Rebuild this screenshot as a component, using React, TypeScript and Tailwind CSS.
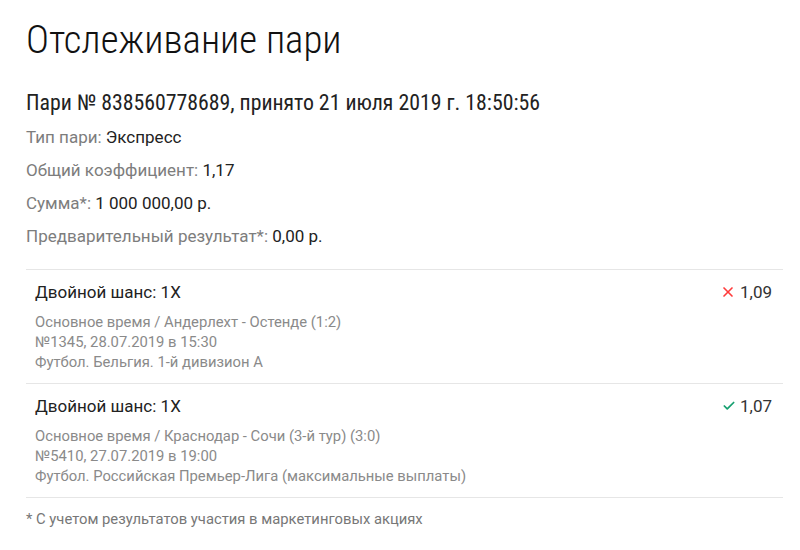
import { X, Check } from 'lucide-react'

interface Leg {
  market: string
  event: string
  number: string
  league: string
  odds: string
  won: boolean
}

const legs: Leg[] = [
  {
    market: 'Двойной шанс: 1X',
    event: 'Основное время / Андерлехт - Остенде (1:2)',
    number: '№1345, 28.07.2019 в 15:30',
    league: 'Футбол. Бельгия. 1-й дивизион А',
    odds: '1,09',
    won: false,
  },
  {
    market: 'Двойной шанс: 1X',
    event: 'Основное время / Краснодар - Сочи (3-й тур) (3:0)',
    number: '№5410, 27.07.2019 в 19:00',
    league: 'Футбол. Российская Премьер-Лига (максимальные выплаты)',
    odds: '1,07',
    won: true,
  },
]

const info = [
  { label: 'Тип пари:', value: 'Экспресс' },
  { label: 'Общий коэффициент:', value: '1,17' },
  { label: 'Сумма*:', value: '1 000 000,00 р.' },
  { label: 'Предварительный результат*:', value: '0,00 р.' },
]

export default function App() {
  return (
    <main className="min-h-screen bg-white pl-[26px] pr-[17px] pt-[20px] font-['Roboto',sans-serif] text-[#222]">
      <h1 className="text-[38.9px] leading-[40px] font-light text-[#111] [font-stretch:87.5%]">Отслеживание пари</h1>

      <div className="mt-[33px] text-[21.8px] leading-[20px] text-[#222] [font-stretch:87.5%]">
        Пари № 838560778689, принято 21 июля 2019 г. 18:50:56
      </div>

      <div className="mt-[8px]">
        {info.map(row => (
          <div key={row.label} className="text-[17px] leading-[33px]">
            <span className="text-[#7d7d7d]">{row.label}</span>{' '}
            <span className="text-[#222]">{row.value}</span>
          </div>
        ))}
      </div>

      <div className="mt-[16px] border-t border-[#e6e6e6]">
        {legs.map((leg, i) => (
          <div key={i} className="border-b border-[#e6e6e6] pl-[9px] pr-[11px] pt-[12px] pb-[11px]">
            <div className="flex items-center justify-between text-[17px] leading-[20px]">
              <span className="text-[#222]">{leg.market}</span>
              <span className="flex items-center gap-[4px] text-[#333]">
                {leg.won ? (
                  <Check className="w-[14px] h-[14px] text-[#16a070]" strokeWidth={3} />
                ) : (
                  <X className="w-[16px] h-[16px] text-[#ff3b3b]" strokeWidth={2.5} />
                )}
                {leg.odds}
              </span>
            </div>
            <div className="mt-[10px] text-[14.8px] leading-[20px] text-[#8a8a8a]">
              <div>{leg.event}</div>
              <div>{leg.number}</div>
              <div>{leg.league}</div>
            </div>
          </div>
        ))}
      </div>

      <div className="mt-[11px] text-[14.8px] leading-[20px] text-[#777]">
        * С учетом результатов участия в маркетинговых акциях
      </div>
    </main>
  )
}
